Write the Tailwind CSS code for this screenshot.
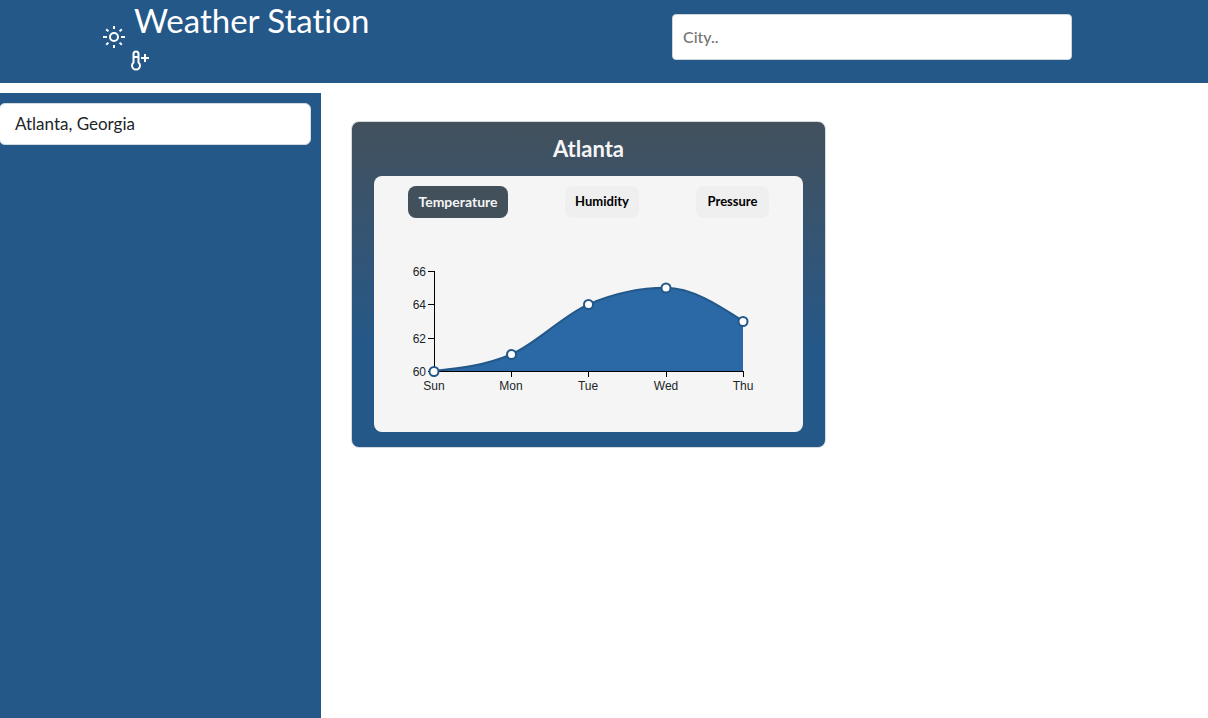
<!DOCTYPE html>
<html lang="en">
<head>
<meta charset="utf-8">
<meta name="viewport" content="width=device-width, initial-scale=1">
<title>Weather Station</title>
<script src="https://cdn.jsdelivr.net/npm/@tailwindcss/browser@4"></script>
</head>
<body class="flex min-h-screen flex-col bg-white font-[Lato,sans-serif] [font-variant-ligatures:none]">
<header class="flex h-[83px] shrink-0 bg-[#235889] text-white">
  <div class="flex w-1/2 pl-[102px]">
    <svg class="mt-[25px] size-6 shrink-0" viewBox="0 0 24 24" fill="none" stroke="currentColor" stroke-width="2" aria-hidden="true">
      <circle cx="12" cy="12" r="4"/>
      <path d="M12 1v3M12 20v3M1 12h4M19 12h4M4.200 4.200l2.200 2.200M17.600 17.600l2.200 2.200M4.200 19.800l2.200-2.200M17.600 6.400l2.200-2.200"/>
    </svg>
    <div class="pl-2">
      <h1 class="text-[33px] leading-10 font-normal">Weather Station</h1>
      <svg class="-ml-1 mt-[10px] h-[22px] w-5" viewBox="0 0 20 22" fill="none" stroke="currentColor" stroke-width="2" aria-hidden="true">
        <path d="M3.500 12.500V4a2.500 2.500 0 0 1 5 0v8.500a4 4 0 1 1-5 0zM4 7h4M11 8h8M15 4v8"/>
      </svg>
    </div>
  </div>
  <form class="flex w-1/2 items-start pt-[14px] pl-[68px]">
    <input type="text" aria-label="City" placeholder="City.." class="h-[46px] w-[400px] rounded border border-[#ced4da] bg-white px-[10px] pb-[2px] text-base font-medium text-black placeholder:text-[#757575]">
  </form>
</header>
<div class="mt-[10px] flex grow">
  <aside class="w-[321px] shrink-0 bg-[#235889] py-[10px] pr-[10px]">
    <ul class="-ml-px">
      <li class="flex h-[42px] items-center rounded-md border border-[#d3dae1] bg-white pl-[15px] text-[17px] text-[#212529]">Atlanta, Georgia</li>
    </ul>
  </aside>
  <main class="grow pt-7 pl-[30px]">
    <section class="w-[475px] rounded-lg border border-[#d5d9dd] bg-linear-to-b from-[#42505c] to-[#235889] to-70% px-[22px] pt-3 pb-[15px]">
      <h2 class="mb-3 text-center text-[22px] leading-[30px] font-bold text-[#f5f5f5]">Atlanta</h2>
      <div class="rounded-lg bg-[#f5f5f5] pt-[10px] pb-[33px]">
        <div class="flex justify-between px-[34px] text-[13px] font-bold text-black">
          <button type="button" class="h-8 w-[100px] rounded-lg bg-[#42505c] text-sm text-[#f5f5f5]">Temperature</button>
          <button type="button" class="h-8 w-[74px] rounded-lg bg-[#efefef]">Humidity</button>
          <button type="button" class="h-8 w-[73px] rounded-lg bg-[#efefef]">Pressure</button>
        </div>
        <svg class="mx-auto mt-[41px] block h-[140px] w-[369px]" viewBox="-30 -12 369 140" role="img" aria-label="Temperature by day">
          <path fill="#2a69a5" d="M0 100C26 97.200 51.500 94.400 77.250 83.300C103 72.200 128.700 44.400 154.500 33.300C180.200 22.200 206 16.700 231.700 16.700C257.500 16.700 283.200 33.300 309 50V100Z"/>
          <path fill="none" stroke="#235889" stroke-width="2" d="M0 100C26 97.200 51.500 94.400 77.250 83.300C103 72.200 128.700 44.400 154.500 33.300C180.200 22.200 206 16.700 231.700 16.700C257.500 16.700 283.200 33.300 309 50"/>
          <path fill="none" stroke="#000" shape-rendering="crispEdges" d="M-6 .5H.5V106M-6 33.500H0M-6 67.500H0M-6 100.500H309.500V106M77.500 100V106M154.500 100V106M232.500 100V106"/>
          <g fill="#fff" stroke="#235889" stroke-width="2">
            <circle cx="0" cy="100.500" r="4.500"/>
            <circle cx="77.500" cy="83.500" r="4.500"/>
            <circle cx="154.500" cy="33.500" r="4.500"/>
            <circle cx="232" cy="17" r="4.500"/>
            <circle cx="309" cy="50.500" r="4.500"/>
          </g>
          <g class="font-['Liberation_Sans',sans-serif] text-[12px]" fill="#212529">
            <g text-anchor="end">
              <text x="-8" y="5">66</text>
              <text x="-8" y="38">64</text>
              <text x="-8" y="72">62</text>
              <text x="-8" y="105">60</text>
            </g>
            <g text-anchor="middle">
              <text x="0" y="119">Sun</text>
              <text x="77" y="119">Mon</text>
              <text x="154" y="119">Tue</text>
              <text x="232" y="119">Wed</text>
              <text x="309" y="119">Thu</text>
            </g>
          </g>
        </svg>
      </div>
    </section>
  </main>
</div>
</body>
</html>
